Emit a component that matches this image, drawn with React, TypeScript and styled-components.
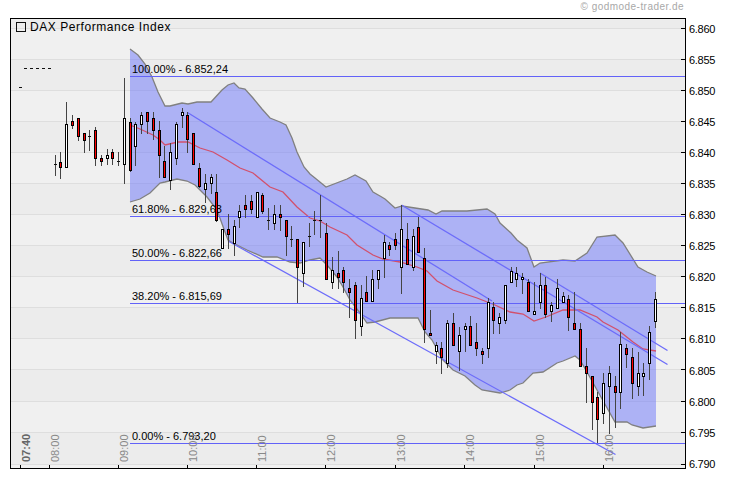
import React from 'react';
import styled, { createGlobalStyle } from 'styled-components';

const GlobalStyle = createGlobalStyle`
    html, body {
        margin: 0;
        padding: 0;
        background: #fff;
    }
    body {
        font-family: "Liberation Sans", Arial, sans-serif;
    }
`;

const Page = styled.div`
    width: 730px;
    height: 481px;
    overflow: hidden;
    background: #fff;
`;
const CopyrightRow = styled.div`
    height: 18px;
    padding: 0 46px 0 0;
    box-sizing: border-box;
    text-align: right;
    font-size: 10px;
    line-height: 14px;
    letter-spacing: 0.46px;
    color: #a8a8a8;
`;
const ChartRow = styled.div`
    display: flex;
    padding-left: 10px;
`;
const PlotFrame = styled.div`
    position: relative;
    width: 676px;
    height: 451px;
    box-sizing: border-box;
    border: 1px solid #000;
    flex: none;
`;
const PlotSvg = styled.svg`
    display: block;
`;
const Legend = styled.div`
    position: absolute;
    left: 5px;
    top: 2px;
    display: flex;
    align-items: center;
    gap: 4px;
    font-size: 12px;
    line-height: 12px;
    letter-spacing: 0.55px;
    color: #000;
`;
const LegendBox = styled.span`
    width: 8px;
    height: 8px;
    border: 1px solid #111;
`;
const PriceAxis = styled.div`
    display: grid;
    grid-template-rows: repeat(15, 31.1px);
    margin-top: -5px;
    padding-left: 3px;
`;
const PriceLabel = styled.div`
    display: flex;
    align-items: center;
    font-size: 11px;
    letter-spacing: -0.3px;
    color: #000;
`;
const FibLabel = styled.text`
    font-size: 11px;
    fill: #000;
`;
const TimeLabel = styled.text<{ $first?: boolean }>`
    font-size: 11px;
    font-weight: ${(p) => (p.$first ? 700 : 400)};
    fill: ${(p) => (p.$first ? '#666' : '#888')};
`;

// price ticks, y in page pixels
const priceTicks: [string, number][] = [
    ['6.860', 28], ['6.855', 59], ['6.850', 90], ['6.845', 121], ['6.840', 152],
    ['6.835', 183], ['6.830', 214], ['6.825', 245], ['6.820', 276], ['6.815', 307],
    ['6.810', 338], ['6.805', 369], ['6.800', 401], ['6.795', 432], ['6.790', 464],
];
const timeTicks: [string, number][] = [
    ['07:40', 20], ['08:00', 49], ['09:00', 118], ['10:00', 187], ['11:00', 256],
    ['12:00', 325], ['13:00', 395], ['14:00', 464], ['15:00', 534], ['16:00', 603],
];
const fibs: [string, number, number][] = [
    ['100.00% - 6.852,24', 76, 73],
    ['61.80% - 6.829,63', 216, 213],
    ['50.00% - 6.822,66', 260, 257],
    ['38.20% - 6.815,69', 303, 300],
    ['0.00% - 6.793,20', 443, 440],
];

const upper = [
    [130, 49], [138, 55], [145, 64], [152, 77], [158, 92], [165, 106], [170, 106], [182, 103], [188, 104],
    [197, 102], [211, 102], [222, 90], [228, 85], [234, 83], [239, 88], [245, 89], [253, 98], [262, 109],
    [270, 118], [280, 122], [286, 125], [292, 138], [297, 152], [304, 167], [310, 174], [315, 178], [326, 187],
    [347, 179], [355, 175], [366, 181], [373, 192], [380, 196], [385, 199], [395, 208], [402, 206], [428, 210],
    [436, 214], [442, 211], [467, 211], [487, 209], [495, 214], [500, 223], [511, 233], [517, 240], [527, 248],
    [534, 267], [540, 263], [563, 260], [575, 261], [587, 253], [597, 237], [615, 235], [623, 243], [638, 267],
    [647, 272], [656, 276],
];
const lower = [
    [656, 426], [643, 428], [632, 425], [627, 422], [615, 422], [597, 390], [587, 372], [580, 360], [575, 356],
    [563, 361], [557, 363], [543, 372], [533, 373], [523, 383], [517, 385], [510, 390], [500, 393], [482, 390],
    [475, 385], [465, 376], [453, 370], [443, 360], [432, 340], [425, 332], [418, 318], [390, 318], [375, 322],
    [367, 323], [360, 313], [350, 300], [343, 287], [337, 277], [327, 265], [320, 258], [310, 260], [300, 263],
    [290, 262], [277, 257], [263, 257], [247, 250], [233, 243], [228, 240], [225, 232], [217, 210], [207, 197],
    [200, 190], [195, 185], [187, 181], [177, 179], [165, 182], [160, 183], [150, 193], [140, 199], [130, 202],
];
const average = [
    [130, 125], [140, 129], [153, 135], [160, 140], [165, 145], [178, 142], [188, 142], [200, 148], [213, 152],
    [227, 160], [240, 168], [253, 173], [270, 187], [283, 192], [297, 207], [310, 218], [320, 221], [330, 227],
    [347, 235], [357, 245], [373, 255], [383, 259], [400, 262], [417, 267], [427, 271], [437, 281], [453, 290],
    [477, 298], [495, 305], [510, 312], [523, 314], [534, 321], [546, 317], [563, 310], [580, 310], [597, 317],
    [603, 322], [618, 330], [633, 342], [643, 349], [656, 351],
];
const channels = [
    [187.5, 112.5, 492, 301],
    [401.5, 205, 667.5, 364.5],
    [540, 273, 667.5, 350.5],
    [228, 241, 615.5, 454.5],
];

type Kind = 'w' | 'r' | 'd';
// x, high, body top, body bottom, low, kind (page pixels)
const candles: [number, number, number, number, number, Kind][] = [
    [20, 87, 87, 87, 87, 'd'], [25, 68, 68, 68, 68, 'd'], [31, 68, 68, 68, 68, 'd'], [37, 68, 68, 68, 68, 'd'],
    [43, 68, 68, 68, 68, 'd'], [49, 68, 68, 68, 68, 'd'],
    [55, 155, 164, 164, 175, 'd'], [60, 152, 162, 167, 178, 'r'], [66, 102, 124, 167, 167, 'w'],
    [72, 115, 121, 125, 128, 'r'], [78, 118, 118, 136, 140, 'r'], [84, 133, 133, 140, 152, 'r'],
    [89, 130, 136, 136, 150, 'd'], [95, 127, 130, 158, 165, 'r'], [101, 155, 158, 161, 165, 'r'],
    [107, 149, 155, 158, 164, 'w'], [112, 149, 152, 158, 164, 'r'], [118, 152, 161, 161, 165, 'd'],
    [124, 78, 118, 164, 183, 'w'], [130, 118, 122, 170, 171, 'r'], [135, 122, 124, 146, 165, 'w'],
    [141, 112, 115, 124, 133, 'w'], [147, 112, 112, 121, 133, 'r'], [153, 112, 118, 130, 139, 'r'],
    [159, 121, 130, 155, 177, 'r'], [164, 146, 161, 177, 177, 'r'], [170, 143, 152, 180, 189, 'w'],
    [176, 122, 124, 158, 164, 'w'], [182, 108, 112, 115, 127, 'w'], [187, 112, 115, 139, 152, 'r'],
    [193, 133, 133, 164, 164, 'r'], [199, 163, 168, 186, 187, 'r'], [205, 174, 183, 189, 202, 'w'],
    [211, 174, 177, 183, 193, 'w'], [216, 174, 192, 220, 221, 'r'], [222, 229, 229, 248, 248, 'w'],
    [228, 214, 229, 234, 248, 'r'], [234, 220, 226, 243, 255, 'w'], [239, 205, 211, 217, 227, 'w'],
    [245, 195, 205, 209, 217, 'r'], [251, 195, 201, 209, 213, 'r'], [257, 192, 192, 217, 217, 'w'],
    [262, 193, 195, 211, 213, 'r'], [268, 208, 220, 220, 229, 'd'], [274, 205, 214, 223, 229, 'w'],
    [280, 205, 214, 217, 230, 'r'], [286, 220, 220, 236, 255, 'r'], [291, 226, 239, 239, 246, 'd'],
    [297, 239, 239, 267, 302, 'r'], [303, 242, 242, 273, 286, 'w'], [309, 223, 236, 236, 246, 'd'],
    [314, 211, 220, 220, 234, 'd'], [320, 195, 220, 220, 237, 'd'], [326, 223, 233, 279, 279, 'r'],
    [332, 257, 270, 282, 288, 'w'], [338, 251, 273, 277, 288, 'r'], [343, 267, 270, 282, 292, 'r'],
    [349, 279, 288, 292, 317, 'r'], [355, 282, 285, 320, 338, 'r'], [361, 285, 298, 326, 335, 'w'],
    [366, 276, 292, 301, 301, 'r'], [372, 270, 279, 301, 301, 'w'], [378, 270, 270, 279, 288, 'w'],
    [384, 235, 242, 258, 277, 'w'], [389, 242, 245, 249, 255, 'r'], [395, 233, 239, 245, 249, 'r'],
    [401, 205, 229, 267, 293, 'w'], [407, 223, 239, 264, 264, 'r'], [413, 229, 236, 267, 270, 'w'],
    [418, 217, 227, 252, 252, 'r'], [424, 248, 258, 329, 342, 'r'], [430, 310, 333, 335, 335, 'r'],
    [436, 342, 345, 351, 363, 'w'], [441, 342, 348, 357, 373, 'r'], [447, 320, 323, 363, 367, 'w'],
    [453, 313, 323, 345, 345, 'r'], [459, 327, 335, 351, 370, 'w'], [465, 323, 326, 329, 351, 'w'],
    [470, 316, 326, 345, 345, 'r'], [476, 323, 342, 348, 355, 'r'], [482, 348, 351, 354, 363, 'r'],
    [488, 298, 302, 348, 357, 'w'], [493, 302, 307, 320, 333, 'r'], [499, 313, 317, 323, 333, 'w'],
    [505, 285, 285, 320, 323, 'w'], [511, 267, 271, 282, 282, 'w'], [516, 267, 273, 279, 286, 'w'],
    [522, 273, 277, 279, 293, 'w'], [528, 279, 282, 311, 311, 'r'], [534, 282, 311, 314, 314, 'w'],
    [540, 273, 285, 302, 308, 'w'], [545, 277, 285, 314, 317, 'r'], [551, 302, 305, 311, 321, 'w'],
    [557, 279, 288, 308, 308, 'w'], [563, 292, 296, 302, 302, 'w'], [568, 295, 299, 317, 330, 'r'],
    [574, 292, 323, 329, 329, 'r'], [580, 323, 329, 366, 366, 'r'], [586, 348, 366, 373, 402, 'r'],
    [592, 376, 376, 402, 429, 'r'], [597, 392, 397, 419, 442, 'r'], [603, 373, 383, 413, 423, 'w'],
    [609, 366, 373, 386, 433, 'w'], [615, 376, 386, 392, 427, 'r'], [620, 332, 344, 392, 408, 'w'],
    [626, 344, 348, 354, 367, 'r'], [632, 348, 357, 383, 398, 'r'], [638, 352, 373, 386, 395, 'w'],
    [643, 363, 373, 376, 395, 'w'], [649, 326, 332, 363, 379, 'w'], [655, 292, 299, 321, 327, 'w'],
];

const toPoints = (pts: number[][]) => pts.map((p) => p.join(',')).join(' ');

const Candle: React.FC<{ c: (typeof candles)[number] }> = ({ c }) => {
    const [x, hi, top, bot, lo, kind] = c;
    return (
        <g shapeRendering="crispEdges">
            {lo > hi && <rect x={x} y={hi} width={1} height={lo - hi + 1} fill="#444" />}
            {kind === 'd' ? (
                <rect x={x - 1} y={top} width={3} height={1} fill="#111" />
            ) : (
                <>
                    <rect x={x - 1} y={top} width={3} height={bot - top + 1} fill="#000" />
                    <rect x={x} y={top + 1} width={1} height={bot - top - 1} fill={kind === 'r' ? '#ff0000' : '#fff'} />
                </>
            )}
        </g>
    );
};

const App: React.FC = () => {
    const bands = priceTicks.slice(0, -1).map(([, y], i) => ({ y, h: priceTicks[i + 1][1] - y, light: i % 2 === 0 }));

    return (
        <Page>
            <GlobalStyle />
            <CopyrightRow>© godmode-trader.de</CopyrightRow>
            <ChartRow>
                <PlotFrame>
                    <PlotSvg width={674} height={449} viewBox="11 19 674 449">
                        <rect x={11} y={19} width={674} height={449} fill="#ececec" />
                        {bands.map((b) =>
                            b.light ? <rect key={b.y} x={11} y={b.y} width={674} height={b.h} fill="#f0f0f0" /> : null
                        )}
                        <rect x={11} y={464} width={674} height={4} fill="#f0f0f0" />
                        {priceTicks.map(([label, y]) => (
                            <rect key={label} x={11} y={y} width={674} height={1} fill="#dedede" />
                        ))}
                        <polygon points={toPoints([...upper, ...lower])} fill="rgba(100,110,250,0.48)" />
                        <polyline points={toPoints(upper)} fill="none" stroke="#808080" strokeWidth={1.3} />
                        <polyline points={toPoints(lower)} fill="none" stroke="#808080" strokeWidth={1.3} />
                        <polyline points={toPoints(average)} fill="none" stroke="#d2506c" strokeWidth={1.3} />
                        {channels.map(([x1, y1, x2, y2]) => (
                            <line key={x1} x1={x1} y1={y1} x2={x2} y2={y2} stroke="#6c6cfa" strokeWidth={1.3} />
                        ))}
                        {fibs.map(([label, y, base]) => (
                            <g key={label}>
                                <rect x={130} y={y} width={555} height={1} fill="#6262f8" shapeRendering="crispEdges" />
                                <FibLabel x={132} y={base}>{label}</FibLabel>
                            </g>
                        ))}
                        {timeTicks.map(([label, x], i) => (
                            <g key={label}>
                                <TimeLabel $first={i === 0} transform={`translate(${x + 10} 462) rotate(-90)`}>
                                    {label}
                                </TimeLabel>
                                <rect x={x} y={465} width={1} height={3} fill="#000" />
                            </g>
                        ))}
                        {candles.map((c) => (
                            <Candle key={c[0]} c={c} />
                        ))}
                        {priceTicks.map(([label, y]) => (
                            <rect key={label} x={681} y={y} width={4} height={1} fill="#000" />
                        ))}
                    </PlotSvg>
                    <Legend>
                        <LegendBox />
                        DAX Performance Index
                    </Legend>
                </PlotFrame>
                <PriceAxis>
                    {priceTicks.map(([label]) => (
                        <PriceLabel key={label}>{label}</PriceLabel>
                    ))}
                </PriceAxis>
            </ChartRow>
        </Page>
    );
};

export default App;
